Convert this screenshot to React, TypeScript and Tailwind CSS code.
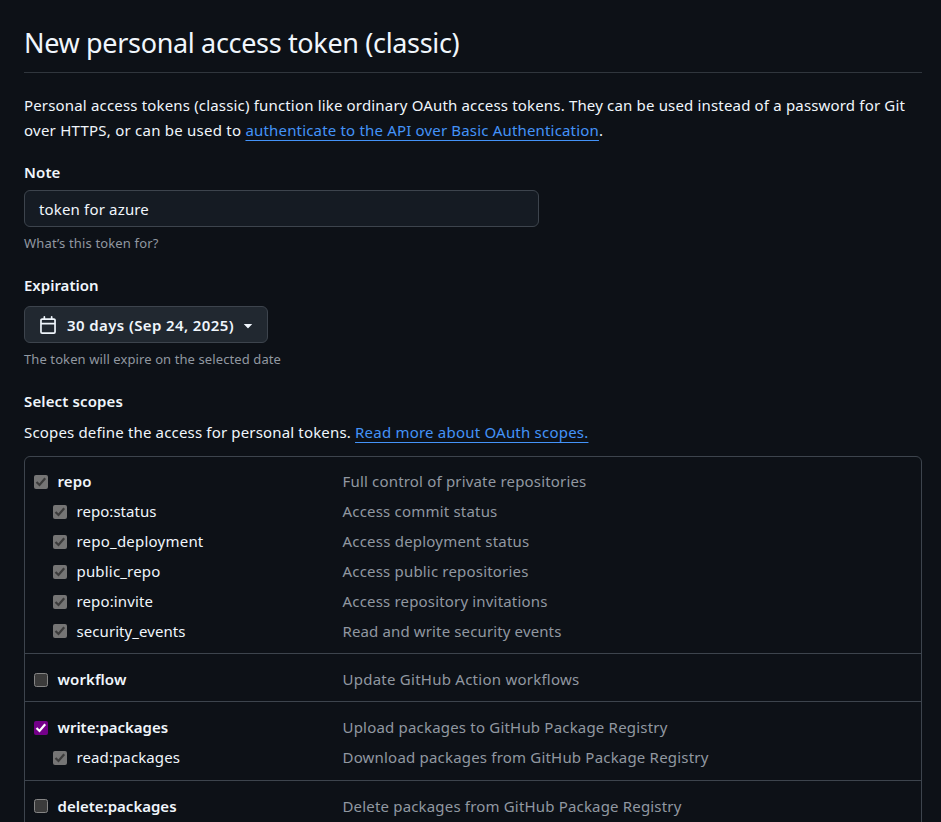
type Scope = { name: string; nameTracking: string; desc: string; descTracking: string; state: "locked" | "off" | "on"; raised?: boolean };

const GROUPS: { pad: string; rows: Scope[] }[] = [
  {
    pad: "pt-[10px] pb-[6px]",
    rows: [
      { name: "repo", nameTracking: "tracking-[0.09px]", desc: "Full control of private repositories", descTracking: "tracking-[0.179px]", state: "locked" },
      { name: "repo:status", nameTracking: "tracking-[0.04px]", desc: "Access commit status", descTracking: "tracking-[0.194px]", state: "locked" },
      { name: "repo_deployment", nameTracking: "tracking-[0.221px]", desc: "Access deployment status", descTracking: "tracking-[0.213px]", state: "locked" },
      { name: "public_repo", nameTracking: "tracking-[0.184px]", desc: "Access public repositories", descTracking: "tracking-[0.185px]", state: "locked" },
      { name: "repo:invite", nameTracking: "tracking-[0.12px]", desc: "Access repository invitations", descTracking: "tracking-[0.175px]", state: "locked" },
      { name: "security_events", nameTracking: "tracking-[0.066px]", desc: "Read and write security events", descTracking: "tracking-[0.132px]", state: "locked", raised: true },
    ],
  },
  {
    pad: "pt-[11px] pb-[6px]",
    rows: [{ name: "workflow", nameTracking: "tracking-[0.086px]", desc: "Update GitHub Action workflows", descTracking: "tracking-[0.25px]", state: "off" }],
  },
  {
    pad: "pt-[11px] pb-[7px]",
    rows: [
      { name: "write:packages", nameTracking: "tracking-[-0.04px]", desc: "Upload packages to GitHub Package Registry", descTracking: "tracking-[0.194px]", state: "on" },
      { name: "read:packages", nameTracking: "tracking-[0.104px]", desc: "Download packages from GitHub Package Registry", descTracking: "tracking-[0.193px]", state: "locked" },
    ],
  },
  {
    pad: "pt-[11px] pb-[7px]",
    rows: [{ name: "delete:packages", nameTracking: "tracking-[0px]", desc: "Delete packages from GitHub Package Registry", descTracking: "tracking-[0.174px]", state: "off", raised: true }],
  },
];

function Checkbox({ state, raised }: { state: Scope["state"]; raised?: boolean }) {
  const place = raised ? "mb-[2px]" : "";
  if (state === "off") {
    return <span className={`size-[14px] shrink-0 rounded-[2.5px] border border-[#858585] bg-[#3b3b3b] ${place}`} />;
  }
  return (
    <span className={`flex size-[14px] shrink-0 items-center justify-center rounded-[2px] ${place} ${state === "on" ? "bg-[#740089] text-white" : "bg-[#757575] text-[#3b3b3b]"}`}>
      <svg width="14" height="14" viewBox="0 0 14 14" fill="none" stroke="currentColor" strokeWidth="2.2">
        <path d="M2.5 7 5.5 10 11.2 3.3" />
      </svg>
    </span>
  );
}

export default function App() {
  return (
    <div className="h-[822px] overflow-hidden bg-[#0d1117] pr-[19px] pl-6 font-['Noto_Sans',sans-serif] text-[15px] text-[#f0f6fc]">
      <h1 className="h-[73px] border-b border-[#30363d] pt-[23px] text-[27px] leading-[40px] tracking-[-0.34px] whitespace-nowrap">New personal access token (classic)</h1>

      <p className="mt-5 leading-[25px] whitespace-nowrap">
        <span className="tracking-[0.169px]">Personal access tokens (classic) function like ordinary OAuth access tokens. They can be used instead of a password for Git</span>
        <br />
        <span className="tracking-[0.24px]">over HTTPS, or can be used to </span>
        <a className="tracking-[0.175px] text-[#4493f8] underline decoration-1 underline-offset-[4px] [text-decoration-skip-ink:none]">authenticate to the API over Basic Authentication</a>.
      </p>

      <div className="mt-[17px] leading-[25px] font-semibold tracking-[0.12px]">Note</div>
      <div className="mt-[5px] flex h-[37px] w-[515px] items-center rounded-[6px] border border-[#3d444d] bg-[#151b23] px-[14px] pt-[2px] tracking-[0.163px]">token for azure</div>
      <div className="mt-[6px] text-[13px] leading-5 tracking-[0.153px] text-[#9198a1]">What’s this token for?</div>

      <div className="mt-5 leading-[25px] font-semibold">Expiration</div>
      <button className="mt-[8px] flex h-[37px] w-[244px] items-center rounded-[6px] border border-[#3d444d] bg-[#212830] pl-[14px] font-semibold whitespace-nowrap">
        <svg width="18" height="18" viewBox="0 0 16 16" fill="currentColor" className="shrink-0">
          <path d="M4.75 0a.75.75 0 0 1 .75.75V2h5V.75a.75.75 0 0 1 1.5 0V2h1.25c.966 0 1.75.784 1.75 1.75v10.5A1.75 1.75 0 0 1 13.25 16H2.75A1.75 1.75 0 0 1 1 14.25V3.75C1 2.784 1.784 2 2.75 2H4V.75A.75.75 0 0 1 4.75 0ZM2.5 7.5v6.75c0 .138.112.25.25.25h10.5a.25.25 0 0 0 .25-.25V7.5Zm10.75-4H2.75a.25.25 0 0 0-.25.25V6h11V3.75a.25.25 0 0 0-.25-.25Z" />
        </svg>
        <span className="ml-[10px] pt-[2px] tracking-[0.394px]">30 days (Sep 24, 2025)</span>
        <svg width="18" height="18" viewBox="0 0 16 16" fill="currentColor" className="ml-[5px] shrink-0">
          <path d="m4.427 7.427 3.396 3.396a.25.25 0 0 0 .354 0l3.396-3.396A.25.25 0 0 0 11.396 7H4.604a.25.25 0 0 0-.177.427Z" />
        </svg>
      </button>
      <div className="mt-[6px] text-[13px] leading-5 tracking-[0.097px] text-[#9198a1]">The token will expire on the selected date</div>

      <div className="mt-5 leading-[25px] font-semibold tracking-[0.13px]">Select scopes</div>
      <p className="mt-[6px] leading-[25px] whitespace-nowrap">
        <span className="tracking-[0.164px]">Scopes define the access for personal tokens. </span>
        <a className="tracking-[0.215px] text-[#4493f8] underline decoration-1 underline-offset-[4px] [text-decoration-skip-ink:none]">Read more about OAuth scopes.</a>
      </p>

      <div className="mt-[11px] divide-y divide-[#3d444d] rounded-[6px] border border-[#3d444d]">
        {GROUPS.map((group) => (
          <div key={group.rows[0].name} className={group.pad}>
            {group.rows.map((row, i) => (
              <div key={row.name} className="flex h-[30px] items-center whitespace-nowrap">
                <div className={`flex h-[30px] w-[317.5px] shrink-0 items-center gap-[9.5px] ${i === 0 ? "pl-[9px] font-semibold" : "pl-[28px]"}`}>
                  <Checkbox state={row.state} raised={row.raised} />
                  <span className={`pb-[2px] ${row.nameTracking}`}>{row.name}</span>
                </div>
                <span className={`pb-[2px] text-[#9198a1] ${row.descTracking}`}>{row.desc}</span>
              </div>
            ))}
          </div>
        ))}
      </div>
    </div>
  );
}
